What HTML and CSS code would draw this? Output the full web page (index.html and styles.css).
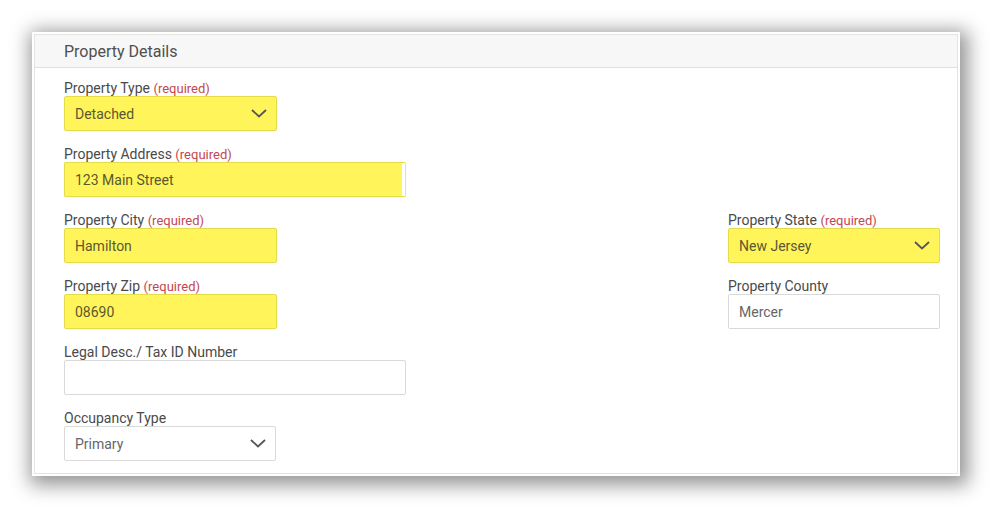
FILE: index.html
```html
<!DOCTYPE html>
<html>
<head>
<meta charset="utf-8">
<link rel="stylesheet" href="styles.css">
</head>
<body>
<div class="panel">
  <div class="panel-inner">
    <div class="panel-header">Property Details</div>
    <div class="panel-body">
      <div class="field c1 r1 w-sm">
        <div class="label">Property Type <span class="req">(required)</span></div>
        <div class="control hl select"><span>Detached</span>
          <svg class="chev" width="16" height="9" viewBox="0 0 16 9"><path d="M1 1 L8 7.5 L15 1" fill="none" stroke="#555" stroke-width="1.8"/></svg>
        </div>
      </div>
      <div class="field c1 r2 w-lg">
        <div class="label">Property Address <span class="req">(required)</span></div>
        <div class="control hl hl-short"><span>123 Main Street</span></div>
      </div>
      <div class="field c1 r3 w-sm">
        <div class="label">Property City <span class="req">(required)</span></div>
        <div class="control hl"><span>Hamilton</span></div>
      </div>
      <div class="field c3 r3">
        <div class="label">Property State <span class="req">(required)</span></div>
        <div class="control hl select"><span>New Jersey</span>
          <svg class="chev" width="16" height="9" viewBox="0 0 16 9"><path d="M1 1 L8 7.5 L15 1" fill="none" stroke="#555" stroke-width="1.8"/></svg>
        </div>
      </div>
      <div class="field c1 r4 w-sm">
        <div class="label">Property Zip <span class="req">(required)</span></div>
        <div class="control hl"><span>08690</span></div>
      </div>
      <div class="field c3 r4">
        <div class="label">Property County</div>
        <div class="control"><span>Mercer</span></div>
      </div>
      <div class="field c1 r5 w-lg">
        <div class="label">Legal Desc./ Tax ID Number</div>
        <div class="control"></div>
      </div>
      <div class="field c1 r6 w-occ">
        <div class="label">Occupancy Type</div>
        <div class="control select"><span>Primary</span>
          <svg class="chev" width="16" height="9" viewBox="0 0 16 9"><path d="M1 1 L8 7.5 L15 1" fill="none" stroke="#555" stroke-width="1.8"/></svg>
        </div>
      </div>
    </div>
  </div>
</div>
</body>
</html>
```
FILE: styles.css
```css
html, body {
  margin: 0;
  padding: 0;
  background: #ffffff;
}
body {
  font-family: Roboto, "Liberation Sans", Arial, sans-serif;
  width: 992px;
  height: 509px;
  overflow: hidden;
}
.panel {
  margin: 32px 0 0 32px;
  width: 924px;
  height: 440px;
  padding: 2px;
  background: #ffffff;
  box-shadow: 3px 4px 18px 5px rgba(0, 0, 0, 0.42);
}
.panel-inner {
  height: 100%;
  box-sizing: border-box;
  border: 1px solid #e2e5e2;
  display: flex;
  flex-direction: column;
}
.panel-header {
  height: 32px;
  background: #f7f7f7;
  border-bottom: 1px solid #dfe1df;
  box-sizing: content-box;
  padding-left: 29px;
  font-size: 16px;
  line-height: 33px;
  color: #4f4f4f;
}
.panel-body {
  padding: 12px 17px 0 29px;
  display: grid;
  grid-template-columns: 342px 1fr 212px;
  row-gap: 15px;
}
.field {
  display: flex;
  flex-direction: column;
}
.c1 { grid-column: 1; }
.c3 { grid-column: 3; }
.r1 { grid-row: 1; }
.r2 { grid-row: 2; }
.r3 { grid-row: 3; }
.r4 { grid-row: 4; }
.r5 { grid-row: 5; }
.r6 { grid-row: 6; }
.w-sm { width: 213px; }
.w-lg { width: 342px; }
.w-occ { width: 212px; }
.label {
  font-size: 14px;
  line-height: 16px;
  height: 16px;
  color: #4a4a4a;
  white-space: nowrap;
}
.req {
  font-size: 13px;
  color: #c4474f;
}
.control {
  height: 35px;
  box-sizing: border-box;
  border: 1px solid #d9d9d9;
  border-radius: 2px;
  background: #ffffff;
  display: flex;
  align-items: center;
  padding: 0 9px 0 10px;
  font-size: 14px;
  color: #666666;
}
.control span { flex: 1; }
.hl {
  background: #fff55a;
  border-color: #e4db48;
  color: #5b5830;
}
.hl-short {
  background: linear-gradient(to right, #fff55a calc(100% - 3px), #ffffff calc(100% - 3px));
  border-color: #e4db48 #dcdcdc #e4db48 #e4db48;
}
.chev {
  display: block;
  flex: none;
}
```
